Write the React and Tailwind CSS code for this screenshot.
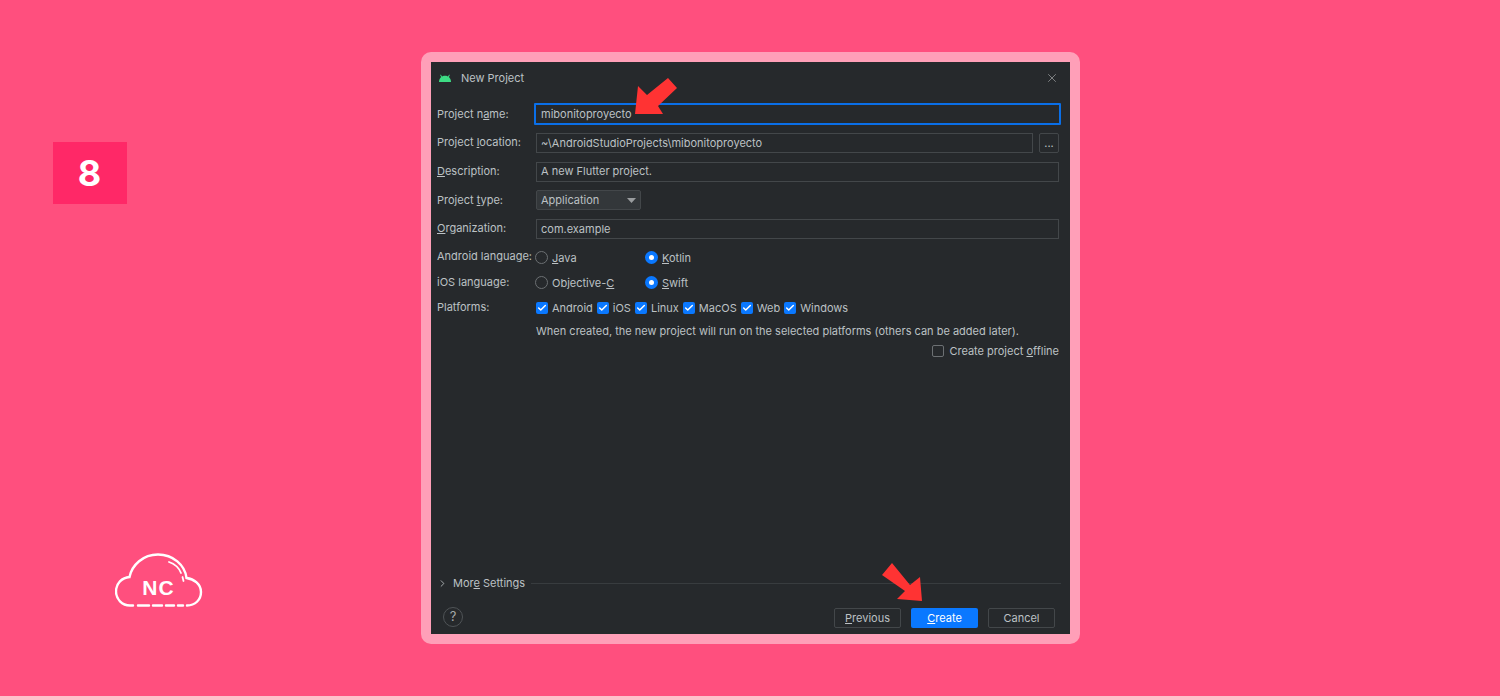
import React from "react";
import { Check, ChevronRight, X } from "lucide-react";

const Label = ({ children }) => (
  <div className="w-[105px] shrink-0 pl-[6px] whitespace-nowrap -mt-[1px]">{children}</div>
);

const Field = ({ children }) => (
  <div className="flex-1 h-[20px] flex items-center px-[4px] border border-[#43474a] bg-[#26292c]">
    {children}
  </div>
);

const Radio = ({ on, children, w }) => (
  <div className={`flex items-center gap-[4px] ${w}`}>
    {on ? (
      <span className="w-[13px] h-[13px] rounded-full bg-[#0a78ff] flex items-center justify-center">
        <span className="w-[5px] h-[5px] rounded-full bg-white" />
      </span>
    ) : (
      <span className="w-[13px] h-[13px] rounded-full border border-[#6c7073]" />
    )}
    <span>{children}</span>
  </div>
);

const Platform = ({ children }) => (
  <div className="flex items-center gap-[4px]">
    <span className="w-[12px] h-[12px] rounded-[2px] bg-[#0a78ff] flex items-center justify-center">
      <Check size={10} strokeWidth={3.5} className="text-white" />
    </span>
    <span>{children}</span>
  </div>
);

const NewProjectDialog = () => (
  <div className="relative w-[659px] h-[592px] mt-[52px] rounded-[10px] bg-[#ff9fb8] p-[10px]">
    <div className="relative w-full h-full flex flex-col bg-[#26292c] text-[#bcc1c4] text-[11px] font-['Inter',sans-serif]">
      {/* title bar */}
      <div className="h-[38px] shrink-0 flex items-center pl-[8px] pr-[11px] pb-[6px]">
        <svg width="12" height="8" viewBox="0 0 12 8" className="mr-[10px]">
          <path d="M0 8 C0 4.5 2.5 1.8 6 1.8 C9.5 1.8 12 4.5 12 8 Z" fill="#3ddc84" />
          <path d="M2.6 3 L1.6 .8 M9.4 3 L10.4 .8" stroke="#3ddc84" strokeWidth="1" />
        </svg>
        <span>New Project</span>
        <X size={14} strokeWidth={1.5} className="ml-auto -mt-[1px] text-[#8a8d8f]" />
      </div>

      {/* form rows */}
      <div className="h-[28.7px] flex items-center">
        <Label>Project n<u>a</u>me:</Label>
        <div className="flex-1 h-[22px] flex items-center pl-[5px] -ml-[2px] mr-[9px] border-2 border-[#0a6fe8] rounded-[1px]">
          mibonitoproyecto
        </div>
      </div>
      <div className="h-[28.7px] flex items-center pr-[11px]">
        <Label>Project <u>l</u>ocation:</Label>
        <Field>~\AndroidStudioProjects\mibonitoproyecto</Field>
        <div className="w-[20px] h-[20px] ml-[6px] rounded-[2px] border border-[#43474a] flex items-center justify-center">
          ...
        </div>
      </div>
      <div className="h-[28.7px] flex items-center pr-[11px]">
        <Label><u>D</u>escription:</Label>
        <Field>A new Flutter project.</Field>
      </div>
      <div className="h-[28.7px] flex items-center">
        <Label>Project <u>t</u>ype:</Label>
        <div className="w-[105px] h-[20px] flex items-center justify-between pl-[4px] pr-[4px] rounded-[2px] border border-[#43474a] bg-[#33373a]">
          <span>Application</span>
          <svg width="9" height="5" viewBox="0 0 9 5">
            <polygon points="0,0 9,0 4.5,5" fill="#9a9d9f" />
          </svg>
        </div>
      </div>
      <div className="h-[28.7px] flex items-center pr-[11px]">
        <Label><u>O</u>rganization:</Label>
        <Field>com.example</Field>
      </div>
      <div className="h-[27px] flex items-center">
        <Label>Android language:</Label>
        <div className="flex items-center mt-[2px] -ml-[1px]">
          <Radio w="w-[110px]"><u>J</u>ava</Radio>
          <Radio on w=""><u>K</u>otlin</Radio>
        </div>
      </div>
      <div className="h-[25px] flex items-center">
        <Label>iOS language:</Label>
        <div className="flex items-center -ml-[1px]">
          <Radio w="w-[110px]">Objective-<u>C</u></Radio>
          <Radio on w=""><u>S</u>wift</Radio>
        </div>
      </div>
      <div className="h-[25px] flex items-center">
        <Label>Platforms:</Label>
        <div className="flex items-center gap-[4px]">
          <Platform>Android</Platform>
          <Platform>iOS</Platform>
          <Platform>Linux</Platform>
          <Platform>MacOS</Platform>
          <Platform>Web</Platform>
          <Platform>Windows</Platform>
        </div>
      </div>
      <div className="h-[21px] flex items-center pl-[105px]">
        When created, the new project will run on the selected platforms (others can be added later).
      </div>
      <div className="h-[19px] flex items-center justify-end pr-[11px] gap-[5px]">
        <span className="w-[12px] h-[12px] rounded-[2px] border border-[#6c7073]" />
        <span>Create project <u>o</u>ffline</span>
      </div>

      <div className="flex-1" />

      {/* more settings */}
      <div className="h-[16px] shrink-0 flex items-center pl-[6px] pr-[9px]">
        <ChevronRight size={11} strokeWidth={1.8} className="mr-[5px] text-[#bcc1c4]" />
        <span>Mor<u>e</u> Settings</span>
        <div className="flex-1 h-px ml-[6px] bg-[#383c3f]" />
      </div>

      {/* footer */}
      <div className="h-[43px] shrink-0 flex items-start pl-[12px] pr-[15px] pt-[17px]">
        <div className="w-[20px] h-[20px] -mt-[1px] rounded-full border border-[#4f5356] flex items-center justify-center text-[13px] text-[#a4a7a9]">
          ?
        </div>
        <div className="ml-auto flex gap-[10px]">
          <div className="w-[67px] h-[20px] rounded-[2px] border border-[#43474a] flex items-center justify-center">
            <span><u>P</u>revious</span>
          </div>
          <div className="w-[67px] h-[20px] rounded-[2px] bg-[#0a78ff] text-white flex items-center justify-center">
            <span><u>C</u>reate</span>
          </div>
          <div className="w-[67px] h-[20px] rounded-[2px] border border-[#43474a] flex items-center justify-center">
            Cancel
          </div>
        </div>
      </div>

      {/* red arrows over the dialog */}
      <svg width="45" height="38" viewBox="0 0 45 38" className="absolute left-[204px] top-[15px]">
        <polygon points="0,37 3,9 12,18 33,1 42,11 23,29 28,37" fill="#ff3333" />
      </svg>
      <svg width="43" height="40" viewBox="0 0 43 40" className="absolute left-[450px] top-[500px]">
        <polygon points="11,1 1,13 24,29 16,37 41,39 39,15 29,23" fill="#ff3333" />
      </svg>
    </div>
  </div>
);

const App = () => (
  <div className="w-[1500px] h-[696px] overflow-hidden flex items-start bg-[#ff4f7e]">
    <div className="w-[421px] h-full shrink-0 flex flex-col">
      <div className="w-[74px] h-[62px] ml-[53px] mt-[142px] pr-[1px] bg-[#ff2867] flex items-center justify-center text-white text-[36px] font-bold font-['Inter',sans-serif]">
        8
      </div>
      <svg width="88" height="55" viewBox="0 0 88 55" className="ml-[115px] mt-[349px]" fill="none" stroke="white" strokeLinecap="round">
        <path
          d="M18 52.5 H15 C7 52.5 1 46 1 38.5 C1 30.5 7 24.5 14.5 24 C17 12 28 1.5 43 1.5 C58 1.5 70 12 71.5 25 C79 26 86 31 86 39 C86 47 80 52.5 72 52.5"
          strokeWidth="2.4"
        />
        <path d="M23 52.5 H34 M38 52.5 H47 M51 52.5 H59 M63 52.5 H68" strokeWidth="2.4" />
        <path d="M54 9 C60 11 64 15 66 20 M67.5 24 L68.5 28" strokeWidth="1.8" />
        <text x="43.5" y="41.5" textAnchor="middle" fill="white" stroke="none" fontSize="21" fontWeight="700" letterSpacing="1" fontFamily="Liberation Sans, sans-serif">
          NC
        </text>
      </svg>
    </div>
    <NewProjectDialog />
  </div>
);

export default App;
